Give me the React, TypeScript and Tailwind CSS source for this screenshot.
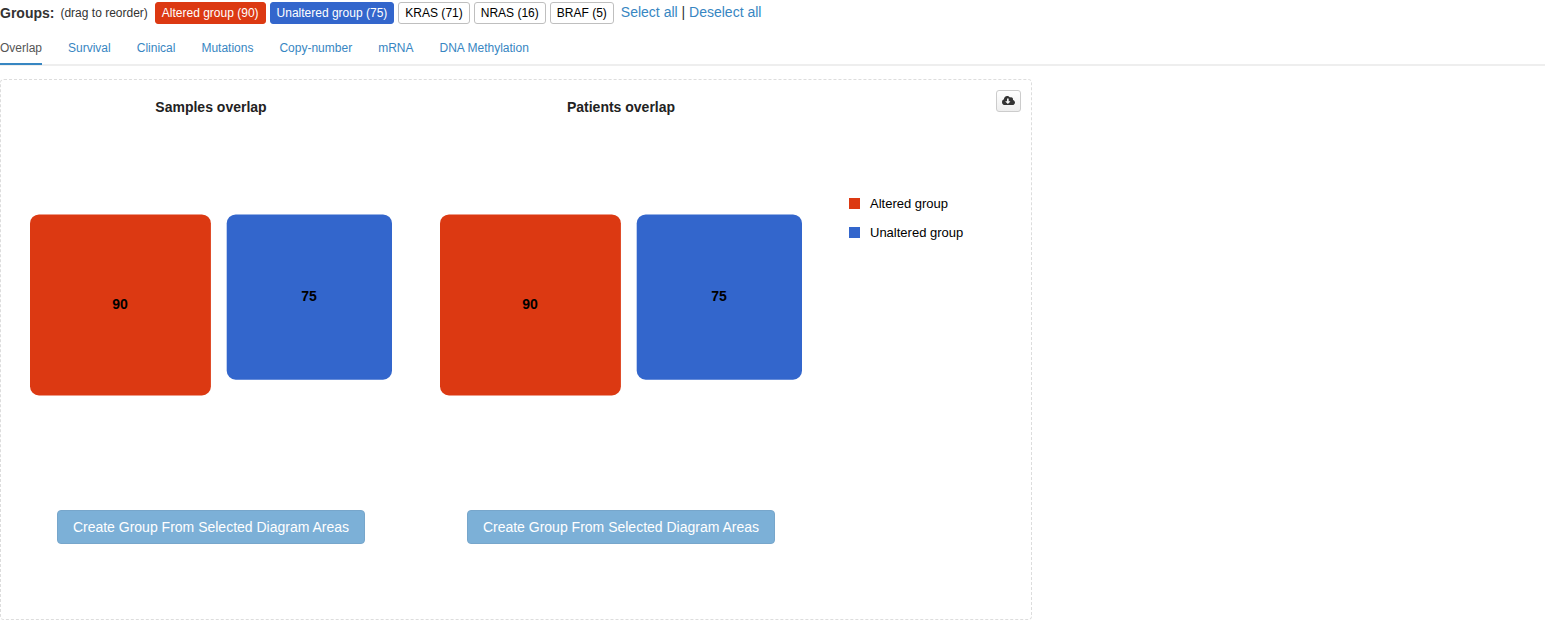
import { useState } from "react";
import { FaCloudDownloadAlt } from "react-icons/fa";

type Group = { name: string; count: number; style: string };

const groups: Group[] = [
  { name: "Altered group", count: 90, style: "border-[#dc3912] bg-[#dc3912] text-white" },
  { name: "Unaltered group", count: 75, style: "border-[#3366cc] bg-[#3366cc] text-white" },
  { name: "KRAS", count: 71, style: "border-[#bfbfbf] bg-white text-black" },
  { name: "NRAS", count: 16, style: "border-[#bfbfbf] bg-white text-black" },
  { name: "BRAF", count: 5, style: "border-[#bfbfbf] bg-white text-black" },
];

const tabs = ["Overlap", "Survival", "Clinical", "Mutations", "Copy-number", "mRNA", "DNA Methylation"];

const legend = [
  { name: "Altered group", swatch: "bg-[#dc3912]" },
  { name: "Unaltered group", swatch: "bg-[#3366cc]" },
];

function GroupBar() {
  return (
    <header className="flex flex-wrap items-center pt-[2px]">
      <strong className="leading-[22px]">Groups:</strong>
      <span className="ml-[6px] text-xs">(drag to reorder)</span>
      <div className="ml-[7px] flex flex-wrap gap-1">
        {groups.map((g) => (
          <button
            key={g.name}
            type="button"
            className={`h-[22px] cursor-pointer rounded-[3px] border px-[6px] text-xs ${g.style}`}
          >
            {g.name} ({g.count})
          </button>
        ))}
      </div>
      <div className="ml-[7px] pb-[2px]">
        <a href="#select-all" className="text-[#3786c2] hover:underline">Select all</a>
        {" | "}
        <a href="#deselect-all" className="text-[#3786c2] hover:underline">Deselect all</a>
      </div>
    </header>
  );
}

function Tabs({ active, onSelect }: { active: string; onSelect: (tab: string) => void }) {
  return (
    <nav className="mt-[7px] border-b-2 border-[#eeeeee]">
      <ul className="-mb-px flex gap-[26px] text-xs">
        {tabs.map((tab) => (
          <li key={tab}>
            <a
              href={`#${tab}`}
              onClick={() => onSelect(tab)}
              className={
                tab === active
                  ? "block border-b-2 border-[#3786c2] pt-[9px] pb-[7px] text-[#555555]"
                  : "block border-b-2 border-transparent pt-[9px] pb-[7px] text-[#3786c2]"
              }
            >
              {tab}
            </a>
          </li>
        ))}
      </ul>
    </nav>
  );
}

function OverlapDiagram({ title }: { title: string }) {
  return (
    <section className="flex w-[410px] flex-col items-center">
      <h2 className="font-bold text-[#222222]">{title}</h2>
      <svg width="362" height="182" viewBox="0 0 362 182" className="mt-[97px]" role="img" aria-label={title}>
        <rect x="0" y="0.4" width="180.9" height="181" rx="9" fill="#dc3912" />
        <rect x="196.7" y="0.4" width="165.3" height="165.3" rx="9" fill="#3366cc" />
        <g fontSize="14" fontWeight="bold" textAnchor="middle" fill="#000000">
          <text x="90" y="95">90</text>
          <text x="279" y="87">75</text>
        </g>
      </svg>
      <button
        type="button"
        disabled
        className="mt-[114px] h-[34px] rounded-[4px] border border-[#3078b0] bg-[#3786c2] px-[15px] text-white opacity-65"
      >
        Create Group From Selected Diagram Areas
      </button>
    </section>
  );
}

export default function App() {
  const [active, setActive] = useState("Overlap");
  return (
    <div className="bg-white font-['Liberation_Sans',Arial,sans-serif] text-sm leading-5 text-[#333333]">
      <GroupBar />
      <Tabs active={active} onSelect={setActive} />
      <main className="relative mt-[13px] flex w-fit rounded-[4px] border border-dashed border-[#dddddd] px-[5px] pt-[17px] pb-[75px]">
        <OverlapDiagram title="Samples overlap" />
        <OverlapDiagram title="Patients overlap" />
        <ul className="flex w-[200px] flex-col gap-[9px] pt-[97px] pl-[23px] text-[13px] leading-5 text-black">
          {legend.map((item) => (
            <li key={item.name} className="flex items-start gap-[10px]">
              <span className={`mt-1 size-[11px] ${item.swatch}`} />
              {item.name}
            </li>
          ))}
        </ul>
        <button
          type="button"
          aria-label="Download"
          className="absolute top-[10px] right-[10px] flex h-[22px] w-[25px] cursor-pointer items-center justify-center rounded-[3px] border border-[#cccccc] bg-linear-to-b from-white to-[#eeeeee] pb-[2px]"
        >
          <FaCloudDownloadAlt size={13} />
        </button>
      </main>
    </div>
  );
}
